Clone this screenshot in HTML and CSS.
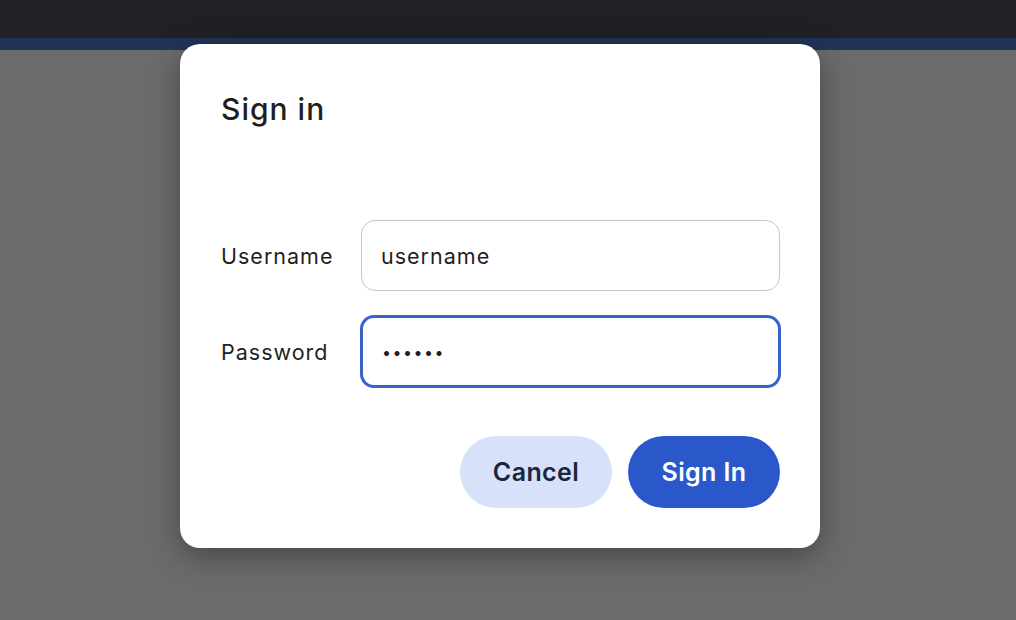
FILE: index.html
```html
<!DOCTYPE html>
<html>
<head>
<meta charset="utf-8">
<link rel="stylesheet" href="styles.css">
</head>
<body>
<div class="topbar"></div>
<div class="strip"></div>
<div class="backdrop">
  <div class="dialog">
    <h1 class="title">Sign in</h1>
    <div class="form">
      <div class="row">
        <label class="label">Username</label>
        <div class="input">username</div>
      </div>
      <div class="row">
        <label class="label">Password</label>
        <div class="input focused"><span class="dots">••••••</span></div>
      </div>
    </div>
    <div class="actions">
      <button class="btn cancel">Cancel</button>
      <button class="btn primary">Sign In</button>
    </div>
  </div>
</div>
</body>
</html>
```
FILE: styles.css
```css
html, body {
  margin: 0;
  padding: 0;
  height: 100%;
  overflow: hidden;
  font-family: Inter, "Noto Sans", sans-serif;
  background: #6b6b6b;
}
.topbar {
  height: 38px;
  background: #202124;
}
.strip {
  height: 12px;
  background: #213458;
}
.backdrop {
  position: relative;
  height: 570px;
  background: #6b6b6b;
}
.dialog {
  position: absolute;
  left: 180px;
  top: -6px;
  width: 640px;
  box-sizing: border-box;
  padding: 40px 40px 40px 40px;
  background: #fff;
  border-radius: 20px;
  box-shadow: 0 8px 30px rgba(0,0,0,0.35);
}
.title {
  margin: 5px 0 0 0;
  font-size: 30px;
  font-weight: 500;
  letter-spacing: 1px;
  color: #1f1f1f;
  line-height: 40px;
  height: 40px;
  padding-left: 1px;
}
.form {
  margin-top: 91px;
  display: flex;
  flex-direction: column;
  gap: 24px;
}
.row {
  display: flex;
  align-items: center;
}
.label {
  width: 140px;
  flex: none;
  font-size: 21.5px;
  letter-spacing: 1px;
  color: #1f1f1f;
  padding-left: 1px;
}
.input {
  flex: 1;
  height: 71px;
  box-sizing: border-box;
  border: 1.5px solid #c7c7c7;
  border-radius: 14px;
  padding-left: 19px;
  display: flex;
  align-items: center;
  font-size: 21.5px;
  letter-spacing: 1px;
  color: #1f1f1f;
}
.input.focused {
  border: 3px solid #3466c9;
  margin-left: -1px;
  margin-right: -1px;
  height: 73px;
  padding-left: 19px;
}
.dots {
  font-size: 16px;
  letter-spacing: 1.5px;
}
.actions {
  margin-top: 48px;
  display: flex;
  justify-content: flex-end;
  gap: 16px;
}
.btn {
  width: 152px;
  height: 72px;
  border: none;
  border-radius: 36px;
  font-family: Inter, "Noto Sans", sans-serif;
  font-size: 25px;
  font-weight: 600;
  letter-spacing: 0.4px;
  padding: 0;
}
.cancel {
  background: #d7e2fa;
  color: #1b2540;
}
.primary {
  background: #2a58cb;
  color: #fff;
}
```
